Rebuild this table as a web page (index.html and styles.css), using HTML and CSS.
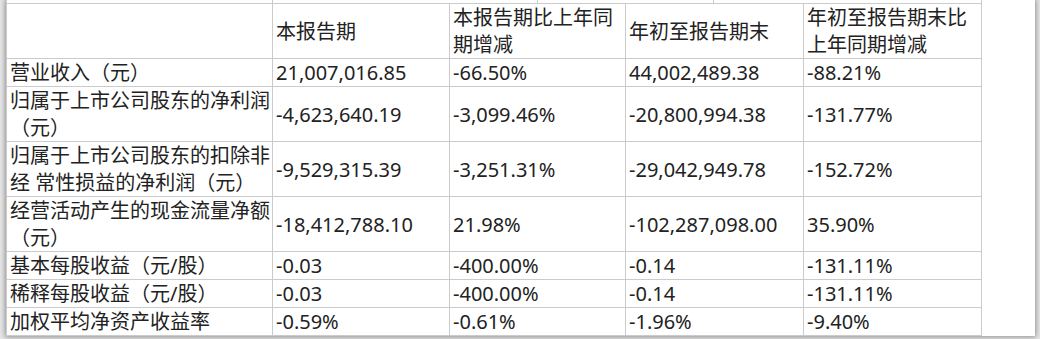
FILE: index.html
```html
<!DOCTYPE html>
<html lang="zh-CN">
<head>
<meta charset="utf-8">
<title>主要会计数据</title>
<link rel="stylesheet" href="styles.css">
</head>
<body>
<div class="panel">
  <div class="strip">
    <div class="sc sc-label"><span>（元）</span></div>
    <div class="sc"></div>
    <div class="sc"></div>
    <div class="sc"></div>
  </div>
  <div class="grid">
    <div class="c"></div>
    <div class="c">本报告期</div>
    <div class="c">本报告期比上年同<br>期增减</div>
    <div class="c">年初至报告期末</div>
    <div class="c">年初至报告期末比<br>上年同期增减</div>

    <div class="c">营业收入（元）</div>
    <div class="c">21,007,016.85</div>
    <div class="c">-66.50%</div>
    <div class="c">44,002,489.38</div>
    <div class="c">-88.21%</div>

    <div class="c">归属于上市公司股东的净利润<br>（元）</div>
    <div class="c">-4,623,640.19</div>
    <div class="c">-3,099.46%</div>
    <div class="c">-20,800,994.38</div>
    <div class="c">-131.77%</div>

    <div class="c">归属于上市公司股东的扣除非<br>经 常性损益的净利润（元）</div>
    <div class="c">-9,529,315.39</div>
    <div class="c">-3,251.31%</div>
    <div class="c">-29,042,949.78</div>
    <div class="c">-152.72%</div>

    <div class="c">经营活动产生的现金流量净额<br>（元）</div>
    <div class="c">-18,412,788.10</div>
    <div class="c">21.98%</div>
    <div class="c">-102,287,098.00</div>
    <div class="c">35.90%</div>

    <div class="c">基本每股收益（元/股）</div>
    <div class="c">-0.03</div>
    <div class="c">-400.00%</div>
    <div class="c">-0.14</div>
    <div class="c">-131.11%</div>

    <div class="c">稀释每股收益（元/股）</div>
    <div class="c">-0.03</div>
    <div class="c">-400.00%</div>
    <div class="c">-0.14</div>
    <div class="c">-131.11%</div>

    <div class="c">加权平均净资产收益率</div>
    <div class="c">-0.59%</div>
    <div class="c">-0.61%</div>
    <div class="c">-1.96%</div>
    <div class="c">-9.40%</div>
  </div>
</div>
</body>
</html>
```

FILE: styles.css
```css
html, body {
  margin: 0;
  padding: 0;
}
body {
  background: #e6e6e6;
  height: 339px;
  overflow: hidden;
  font-family: "Noto Sans", "Noto Sans CJK SC", sans-serif;
  font-size: 20px;
  color: #222;
}
.panel {
  margin-left: 6px;
  width: 1029px;
  height: 336px;
  background: #fff;
  box-shadow: 0 0 5px 1px rgba(0, 0, 0, 0.38);
}
.strip {
  display: grid;
  grid-template-columns: 265px 264px 175px 267px;
  column-gap: 1px;
  padding: 0 1px;
  width: 974px;
  height: 3px;
  background: #cbcbcb;
  overflow: hidden;
}
.sc {
  background: #fff;
  height: 3px;
  overflow: hidden;
  display: flex;
  align-items: flex-end;
  padding: 0 3px;
  line-height: 27px;
  white-space: nowrap;
}
.sc span {
  flex: none;
}
.grid {
  display: grid;
  grid-template-columns: 265px 176px 175px 177px 177px;
  grid-template-rows: 54px 27px 54px 54px 54px 27px 27px 27px;
  gap: 1px;
  padding: 1px;
  width: 974px;
  background: #cbcbcb;
}
.c {
  background: #fff;
  display: flex;
  align-items: center;
  padding: 0 3px;
  line-height: 27px;
  white-space: nowrap;
  overflow: hidden;
}
```
